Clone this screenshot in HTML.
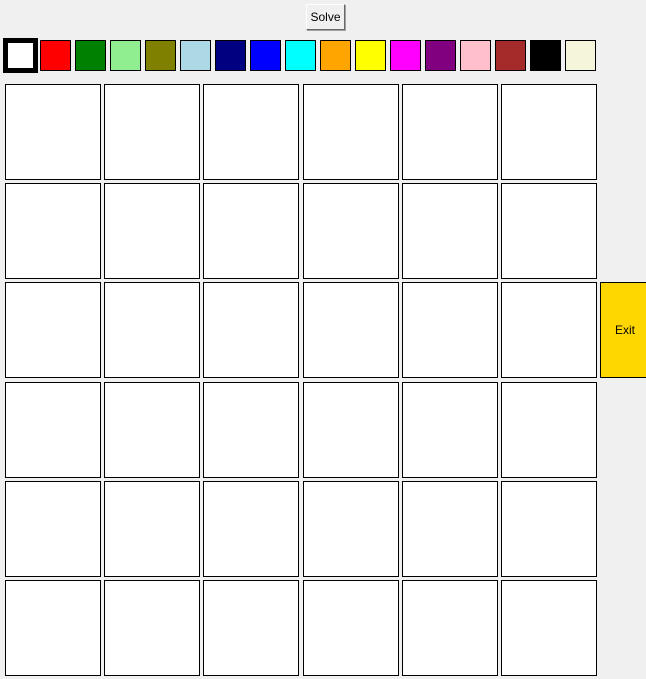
<!DOCTYPE html>
<html><head><meta charset="utf-8"><style>
html,body{margin:0;padding:0;}
body{width:646px;height:679px;background:#f0f0f0;position:relative;overflow:hidden;font-family:"Liberation Sans",sans-serif;}
.a{position:absolute;box-sizing:border-box;}
.sw{width:31px;height:31px;border:1px solid #000;top:40px;}
.c{width:96px;height:96px;border:1px solid #000;background:#fff;}
#solve{left:306px;top:4px;width:39px;height:26px;background:#f0f0f0;border:1px solid;border-color:#fff #696969 #696969 #fff;box-shadow:1px 1px 0 #a0a0a0;font-size:12px;line-height:24px;text-align:center;color:#000;}
#exit{left:600px;top:282px;width:50px;height:96px;background:#ffd700;border:1px solid #000;font-size:12px;line-height:94px;padding-left:14px;}
</style></head><body>
<div id="solve" class="a">Solve</div>
<div class="a" style="left:3px;top:38px;width:35px;height:35px;border:5px solid #000;background:#fff;"></div>
<div id="sws"></div>
<div id="grid"></div>
<div id="exit" class="a">Exit</div>
<script>
var cols=["red","green","#90ee90","olive","lightblue","navy","blue","cyan","orange","yellow","magenta","purple","pink","brown","black","beige"];
var h="";
for(var i=0;i<cols.length;i++){h+='<div class="a sw" style="left:'+(40+35*i)+'px;background:'+cols[i]+'"></div>';}
document.getElementById("sws").innerHTML=h;
h="";
for(var r=0;r<6;r++)for(var c=0;c<6;c++){h+='<div class="a c" style="left:'+Math.round(5+99.2*c)+'px;top:'+Math.round(84+99.2*r)+'px"></div>';}
document.getElementById("grid").innerHTML=h;
</script>
</body></html>
